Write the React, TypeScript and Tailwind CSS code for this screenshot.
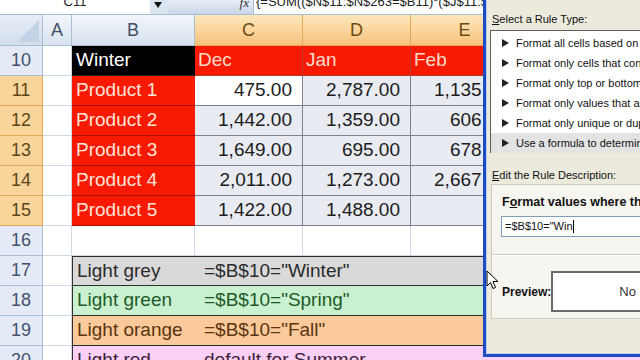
import React from 'react';

const rows = [
  { n: 11, p: 'Product 1', c: '475.00', d: '2,787.00', e: '1,135.00' },
  { n: 12, p: 'Product 2', c: '1,442.00', d: '1,359.00', e: '606.00' },
  { n: 13, p: 'Product 3', c: '1,649.00', d: '695.00', e: '678.00' },
  { n: 14, p: 'Product 4', c: '2,011.00', d: '1,273.00', e: '2,667.00' },
  { n: 15, p: 'Product 5', c: '1,422.00', d: '1,488.00', e: '' },
];

const bands = [
  { n: 17, a: 'Light grey', b: '=$B$10="Winter"', cls: 'bg-[#d9d9d9] text-[#2b2b2b]' },
  { n: 18, a: 'Light green', b: '=$B$10="Spring"', cls: 'bg-[#c9f1d0] text-[#1d5a26]' },
  { n: 19, a: 'Light orange', b: '=$B$10="Fall"', cls: 'bg-[#fbc99a] text-[#5a3410]' },
  { n: 20, a: 'Light red', b: 'default for Summer', cls: 'bg-[#fbd0f7] text-[#3d2038]' },
];

const items = [
  'Format all cells based on their values',
  'Format only cells that contain',
  'Format only top or bottom ranked values',
  'Format only values that are above or below average',
  'Format only unique or duplicate values',
  'Use a formula to determine which cells to format',
];

function RowHdr({ n, sel }: { n: number; sel?: boolean }) {
  return (
    <div
      className={
        sel
          ? 'flex items-center justify-center text-[18px] border-r border-b border-[#e2a85a] bg-[#f9d59c] text-[#5c4617]'
          : 'flex items-center justify-center text-[18px] border-r border-b border-[#a9bdd4] bg-[#e4ebf6] text-[#44516b]'
      }
    >
      {n}
    </div>
  );
}

function ColHdr({ l, sel }: { l: string; sel?: boolean }) {
  return (
    <div
      className={
        sel
          ? 'flex items-center justify-center text-[18px] border-r border-b border-[#e2a85a] bg-linear-to-b from-[#fde8bd] to-[#f7c27c] text-[#6d4c10]'
          : 'flex items-center justify-center text-[18px] border-r border-b border-[#a9bdd4] bg-linear-to-b from-[#f2f6fb] to-[#d8e2ee] text-[#3e4e69]'
      }
    >
      {l}
    </div>
  );
}

const blank = 'bg-white border-r border-b border-[#d0d7e5]';
const num = 'flex items-center justify-end pr-[10px] text-[19px] text-[#1c1c1c] border-r border-b border-[#7d838c]';

export default function App() {
  return (
    <div className="relative w-[640px] h-[360px] overflow-hidden bg-white font-['Liberation_Sans',Arial,sans-serif]">
      {/* formula bar */}
      <div className="flex h-[15px] bg-[#dbe5f1] border-b border-[#a8bcd6] overflow-hidden">
        <div className="w-[150px] bg-white flex justify-center overflow-hidden">
          <span className="text-[13px] leading-[14px] -mt-[5px] text-[#222]">C11</span>
        </div>
        <div className="w-[16px] flex justify-center pt-[2px]">
          <svg width="8" height="6" viewBox="0 0 8 6"><path d="M0 0 L8 0 L4 6 Z" fill="#111" /></svg>
        </div>
        <div className="w-[87px] bg-linear-to-b from-[#e8eef7] to-[#c9d6e8] rounded-bl-[8px] rounded-tl-[8px] flex justify-end pr-[4px] overflow-hidden">
          <span className="text-[13px] leading-[14px] -mt-[4px] italic font-['Liberation_Serif',serif] text-[#333]">fx</span>
        </div>
        <div className="flex-1 bg-white pl-[2px] overflow-hidden border-l border-[#a8bcd6]">
          <span className="block whitespace-nowrap text-[13px] leading-[14px] -mt-[5px] text-[#222]">
            {'{=SUM(($N$11:$N$263=$B11)*($J$11:$J$263=C$10)*$O$11:$O$263)}'}
          </span>
        </div>
      </div>

      {/* grid */}
      <div className="grid grid-cols-[43px_29px_123px_108px_108px_108px_1fr] grid-rows-[31px_repeat(11,30px)]">
        <div className="relative bg-linear-to-b from-[#e6edf6] to-[#d3deec] border-r border-b border-[#a9bdd4]">
          <svg className="absolute right-[3px] bottom-[3px]" width="22" height="22" viewBox="0 0 22 22">
            <path d="M22 0 L22 22 L0 22 Z" fill="#c3d2e6" />
          </svg>
        </div>
        <ColHdr l="A" />
        <ColHdr l="B" />
        <ColHdr l="C" sel />
        <ColHdr l="D" sel />
        <ColHdr l="E" sel />
        <ColHdr l="F" />

        <RowHdr n={10} />
        <div className={blank} />
        <div className="bg-black text-white text-[19px] flex items-center pl-[4px] border-b border-[#222]">Winter</div>
        {['Dec', 'Jan', 'Feb'].map((m) => (
          <div key={m} className="bg-[#f81a00] text-[#ffdccc] text-[19px] flex items-center pl-[3px] border-r border-b border-[#b53a2a]">
            {m}
          </div>
        ))}
        <div className={blank} />

        {rows.map((r) => (
          <React.Fragment key={r.n}>
            <RowHdr n={r.n} sel />
            <div className={blank} />
            <div className="bg-[#f81a00] text-[#ffe4d8] text-[19px] flex items-center pl-[4px] border-b border-[#a81200]">{r.p}</div>
            <div className={`${num} ${r.n === 11 ? 'bg-white' : 'bg-[#e8ebf1]'}`}>{r.c}</div>
            <div className={`${num} bg-[#e8ebf1]`}>{r.d}</div>
            <div className={`${num} bg-[#e8ebf1]`}>{r.e}</div>
            <div className={blank} />
          </React.Fragment>
        ))}

        <RowHdr n={16} />
        <div className={blank} />
        <div className={blank} />
        <div className={blank} />
        <div className={blank} />
        <div className={blank} />
        <div className={blank} />

        {bands.map((b, i) => (
          <React.Fragment key={b.n}>
            <RowHdr n={b.n} />
            <div className={blank} />
            <div
              className={`col-span-5 flex items-center pl-[4px] text-[19px] whitespace-nowrap border-l border-b border-[#2e2e2e] ${
                i === 0 ? 'border-t' : ''
              } ${b.cls}`}
            >
              <span className="w-[127px]">{b.a}</span>
              <span>{b.b}</span>
            </div>
          </React.Fragment>
        ))}
      </div>

      {/* Dialog */}
      <div className="absolute left-[483px] top-0 w-[200px] h-[357px] bg-[#ece9dd] border-l-[3px] border-b-[3px] border-[#1d4cc2] text-[11px] text-[#111]">
        <div className="h-full border-l border-b border-[#b9cdf0] pl-[3px] pt-[13px]">
          <div className="pl-[2px] leading-[13px] whitespace-nowrap">
            <span className="underline">S</span>elect a Rule Type:
          </div>
          <div className="mt-[4px] h-[123px] bg-white border border-[#5d5d5d] pt-[2px]">
            {items.map((t, i) => (
              <div
                key={t}
                className={`h-[20px] flex items-center pl-[11px] whitespace-nowrap ${i === 5 ? 'bg-[#e3e3e3]' : ''}`}
              >
                <svg className="mr-[7px] shrink-0" width="7" height="8" viewBox="0 0 7 8">
                  <path d="M0 0 L7 4 L0 8 Z" fill="#222" />
                </svg>
                <span>{t}</span>
              </div>
            ))}
          </div>
          <div className="mt-[16px] pl-[2px] leading-[13px] whitespace-nowrap">
            <span className="underline">E</span>dit the Rule Description:
          </div>
          <div className="mt-[2px] ml-[1px] h-[135px] bg-[#f6f5f0] border border-[#cfcbbf] pt-[10px]">
            <div className="pl-[10px] font-bold text-[12.5px] leading-[14px] whitespace-nowrap">
              F<span className="underline">o</span>rmat values where this formula is true:
            </div>
            <div className="mt-[7px] ml-[9px] h-[21px] bg-white border border-[#7f9db9] flex items-center pl-[3px]">
              <span>=$B$10="Win</span>
              <span className="w-px h-[13px] bg-black" />
            </div>
            <div className="mt-[17px] h-[2px] border-t border-[#cdc9bd] border-b border-b-white" />
            <div className="mt-[15px] flex items-center pl-[10px]">
              <span className="w-[60px] font-bold text-[12px]">Preview:</span>
              <div className="h-[41px] flex-1 bg-white border-2 border-[#6a6a6a] flex items-center pl-[66px] text-[13px] text-[#333] whitespace-nowrap">
                No Format Set
              </div>
            </div>
          </div>
        </div>
      </div>

      {/* mouse cursor */}
      <svg className="absolute left-[486px] top-[270px]" width="13" height="20" viewBox="0 0 13 20">
        <path d="M1 1 L1 16 L4.5 12.5 L7 18.5 L9.5 17.5 L7 11.5 L12 11.5 Z" fill="white" stroke="black" strokeWidth="1" strokeLinejoin="round" />
      </svg>
    </div>
  );
}
